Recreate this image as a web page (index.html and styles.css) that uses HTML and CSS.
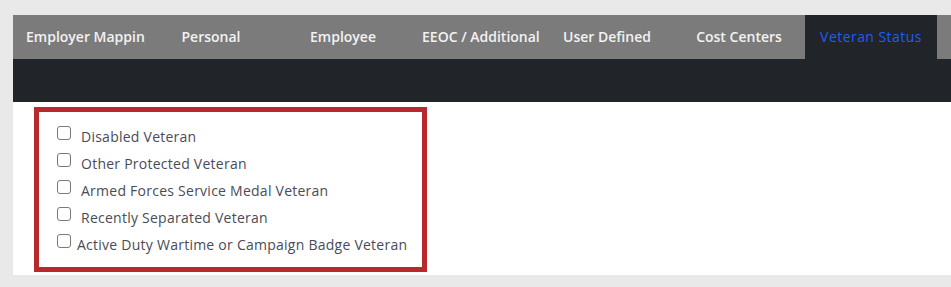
FILE: index.html
```html
<!DOCTYPE html>
<html>
<head>
<meta charset="utf-8">
<link rel="stylesheet" href="styles.css">
</head>
<body>
<div class="panel">
  <div class="tabs">
    <div class="tab">Employer Mapping</div>
    <div class="tab">Personal</div>
    <div class="tab">Employee</div>
    <div class="tab">EEOC / Additional</div>
    <div class="tab">User Defined</div>
    <div class="tab">Cost Centers</div>
    <div class="tab active">Veteran Status</div>
  </div>
  <div class="darkbar"></div>
  <div class="content">
    <div class="box">
      <label class="row"><input type="checkbox"><span class="txt">Disabled Veteran</span></label>
      <label class="row"><input type="checkbox"><span class="txt">Other Protected Veteran</span></label>
      <label class="row"><input type="checkbox"><span class="txt">Armed Forces Service Medal Veteran</span></label>
      <label class="row"><input type="checkbox"><span class="txt">Recently Separated Veteran</span></label>
      <label class="row"><input type="checkbox"><span class="txt tight">Active Duty Wartime or Campaign Badge Veteran</span></label>
    </div>
  </div>
</div>
</body>
</html>
```
FILE: styles.css
```css
html, body {
  margin: 0;
  padding: 0;
  background: #e9e9e9;
}
body {
  font-family: "Open Sans", "Liberation Sans", sans-serif;
  overflow: hidden;
}
.panel {
  margin: 15px 0 0 13px;
  width: 960px;
  background: #ffffff;
}
.tabs {
  display: flex;
  height: 44px;
  background: #7b7b7b;
}
.tab {
  width: 132px;
  flex: 0 0 132px;
  box-sizing: border-box;
  padding: 0 13px;
  overflow: hidden;
  white-space: nowrap;
  text-align: center;
  line-height: 44px;
  font-size: 14px;
  font-weight: 600;
  color: #f2f2f2;
}
.tab.active {
  background: #212428;
  color: #1c5ff5;
  font-weight: 500;
  letter-spacing: 0.45px;
}
.darkbar {
  height: 43px;
  background: #212428;
}
.content {
  height: 173px;
  padding: 5px 0 0 21px;
  box-sizing: border-box;
}
.box {
  width: 393px;
  height: 165px;
  box-sizing: border-box;
  border: 5px solid #b8292b;
  padding: 11px 0 0 14px;
}
.row {
  display: block;
  height: 27px;
  line-height: 27px;
  font-size: 14px;
  letter-spacing: 0.25px;
  color: #4a4b57;
}
.row input {
  -webkit-appearance: none;
  appearance: none;
  box-sizing: border-box;
  margin: 0 3px 0 4px;
  width: 14px;
  height: 14px;
  border: 1px solid #7a7a7a;
  border-radius: 3px;
  background: #ffffff;
  vertical-align: 2px;
}
.txt {
  margin-left: 7px;
}
.txt.tight {
  margin-left: 3px;
}
```
